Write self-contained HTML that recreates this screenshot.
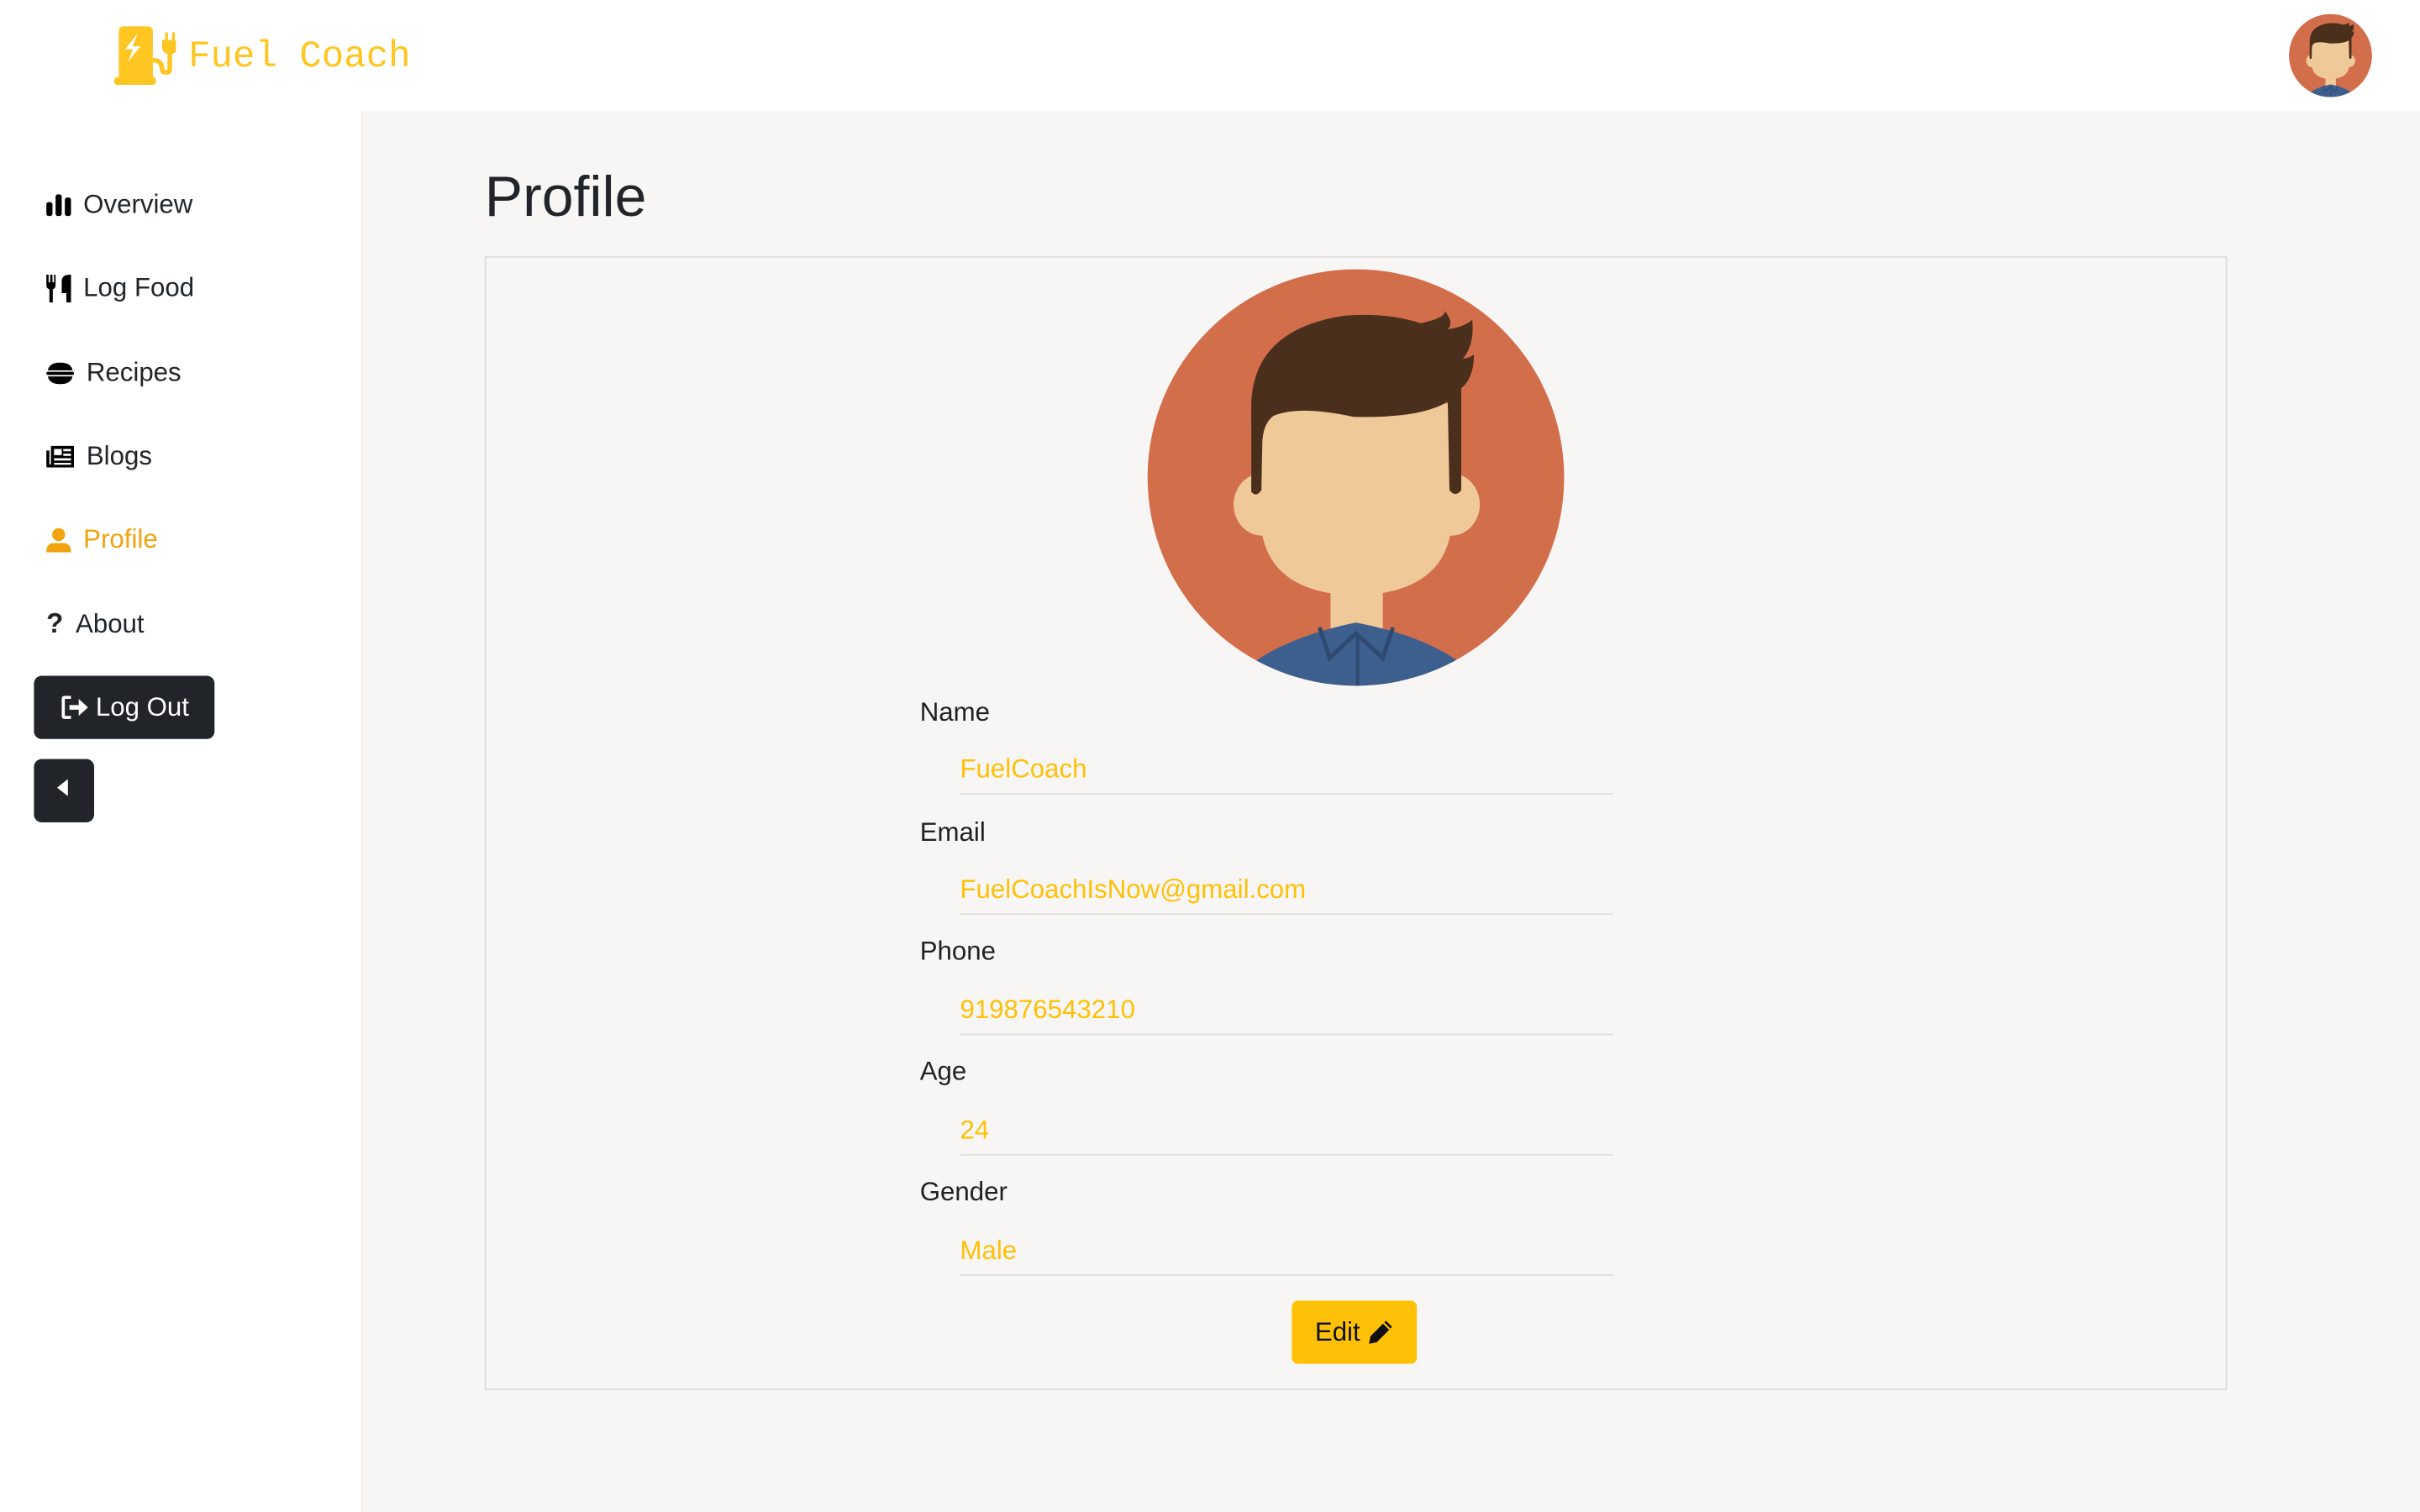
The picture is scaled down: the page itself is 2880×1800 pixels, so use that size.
<!DOCTYPE html>
<html><head><meta charset="utf-8">
<style>
*{margin:0;padding:0;box-sizing:border-box}
html,body{width:2880px;height:1800px;overflow:hidden;background:#fff}
#w{width:1568px;height:980px;transform:scale(1.836735);transform-origin:0 0;position:relative;font-family:"Liberation Sans","DejaVu Sans",sans-serif;color:#212529}
.hdr{position:absolute;left:0;top:0;width:1568px;height:72px;background:#fff}
.logo{position:absolute;left:74px;top:17px}
.brand{position:absolute;left:122px;top:24px;font-family:"Liberation Mono",monospace;font-size:24px;color:#ffc520}
.side{position:absolute;left:0;top:72px;width:234px;height:908px;background:#fff}
.main{position:absolute;left:234px;top:72px;width:1334px;height:908px;background:#f7f6f5;border-left:1px solid #eee}
.nav{position:absolute;left:30px;font-size:17px;display:flex;align-items:center}
.nav svg{margin-right:8px}
.btn{position:absolute;background:#212529;border-radius:5px;color:#fff}
h1{position:absolute;left:314px;top:107px;font-weight:400;font-size:37px;color:#212529}
.card{position:absolute;left:314px;top:166px;width:1129px;height:735px;border:1px solid #ddd}
.lbl{position:absolute;left:596px;font-size:17px;color:#222}
.val{position:absolute;left:622px;width:423px;font-size:17px;color:#ffc107;border-bottom:1px solid #ddd;height:26px}
.edit{position:absolute;left:837px;top:843px;width:81px;height:41px;background:#ffc107;border-radius:4px;font-size:17px;color:#111;display:flex;align-items:center;justify-content:center}
</style></head><body><div id="w">
<div class="hdr"></div>
<svg class="logo" width="40" height="38" viewBox="0 0 40 38">
<rect x="3" y="0" width="22" height="36" rx="3" fill="#ffc520"/><rect x="0" y="33" width="27" height="5" rx="2" fill="#ffc520"/>
<path d="M15 5 L7 15 L12 15 L9 23 L17 13 L12 13 Z" fill="#fff"/>
<path d="M25 22 Q31 22 31 28 Q31 30 34 30 Q36 30 36 27 L36 17" stroke="#ffc520" stroke-width="3" fill="none"/>
<path d="M31 9 L41 9 L41 13 Q41 18 36 18 Q31 18 31 13 Z" fill="#ffc520"/><rect x="33" y="4" width="1.8" height="6" fill="#ffc520"/><rect x="37.5" y="4" width="1.8" height="6" fill="#ffc520"/>
</svg>
<div class="brand">Fuel Coach</div>
<svg style="position:absolute;left:1483px;top:9px" width="54" height="54" viewBox="5 20 496 496"><use href="#av"/></svg>
<div class="side"></div>
<div class="main"></div>
<div class="nav" style="top:123px"><svg width="16" height="16" viewBox="0 0 16 16"><rect x="0" y="6" width="4" height="9" rx="1.5"/><rect x="6" y="1" width="4" height="14" rx="1.5"/><rect x="12" y="3" width="4" height="12" rx="1.5"/></svg>Overview</div>
<div class="nav" style="top:177px"><svg width="16" height="18" viewBox="0 0 16 18"><path d="M0 0h1.5v5h1V0h1.5v5h1V0H6v7Q6 9 4.2 9.5V18H2V9.5Q0 9 0 7Z"/><path d="M10 4Q10 0 16 0V18H13V12H10Z"/></svg>Log Food</div>
<div class="nav" style="top:232px"><svg width="18" height="14" viewBox="0 0 18 14"><path d="M1 5Q2 0 9 0Q16 0 17 5Z"/><rect x="0" y="6" width="18" height="2" rx="1"/><path d="M1 9H17Q16 14 9 14Q2 14 1 9Z"/></svg>Recipes</div>
<div class="nav" style="top:286px"><svg width="18" height="16" viewBox="0 0 18 16"><path d="M3 1H18V15H1Q0 15 0 14V4H2V13H3Z" /><rect x="5" y="3" width="5" height="4" fill="#fff"/><rect x="11" y="3" width="5" height="1.5" fill="#fff"/><rect x="11" y="6" width="5" height="1.5" fill="#fff"/><rect x="5" y="9" width="11" height="1.5" fill="#fff"/><rect x="5" y="12" width="11" height="1.2" fill="#fff"/></svg>Blogs</div>
<div class="nav" style="top:340px;color:#f0a30e"><svg width="16" height="16" viewBox="0 0 16 16"><circle cx="8" cy="4.5" r="4.2" fill="#f0a30e"/><path d="M0 16Q0 10 5 10H11Q16 10 16 16Z" fill="#f0a30e"/></svg>Profile</div>
<div class="nav" style="top:394px"><span style="font-weight:bold;font-size:18px;margin-right:8px">?</span>About</div>
<div class="btn" style="left:22px;top:438px;width:117px;height:41px;font-size:17px;display:flex;align-items:center;padding-left:18px"><svg width="18" height="16" viewBox="0 0 18 16" style="margin-right:4px"><path d="M6 1H2Q1 1 1 2V13Q1 14 2 14H6" stroke="#fff" stroke-width="2" fill="none"/><path d="M5 6H11V2L17 7.5L11 13V9H5Z" fill="#fff"/></svg>Log Out</div>
<div class="btn" style="left:22px;top:492px;width:39px;height:41px"><svg width="39" height="41" viewBox="0 0 39 41"><path d="M22 13V24L15 18.5Z" fill="#fff"/></svg></div>
<h1>Profile</h1>
<div class="card"></div>
<svg style="position:absolute;left:743px;top:174px" width="271" height="271" viewBox="5 20 496 496">
<defs><clipPath id="cc"><circle cx="253" cy="268" r="247"/></clipPath>
<g id="av"><g clip-path="url(#cc)">
<circle cx="253" cy="268" r="248" fill="#d36e4a"/>
<ellipse cx="142" cy="300" rx="34" ry="37" fill="#f0c999"/><ellipse cx="366" cy="300" rx="34" ry="37" fill="#f0c999"/>
<rect x="223" y="380" width="62" height="75" fill="#f0c999"/>
<path d="M140 190 L140 320 Q145 405 253 408 Q362 405 367 320 L367 180 Z" fill="#f0c999"/>
<path d="M135 485 Q180 455 253 440 Q330 455 373 485 L373 540 L135 540 Z" fill="#3d5f8d"/>
<path d="M210 446 L222 482 L253 453 L285 482 L297 446" stroke="#2e4a70" stroke-width="5" fill="none"/><line x1="255" y1="455" x2="255" y2="520" stroke="#2e4a70" stroke-width="4"/>
<path d="M129 285 L129 180 Q132 92 240 76 Q290 72 330 85 Q362 78 358 70 Q370 84 362 92 Q380 90 391 81 Q394 110 380 127 Q388 126 393 122 Q393 150 378 162 L378 283 Q371 292 364 283 L362 178 Q330 198 250 196 Q185 182 155 195 Q142 205 142 230 L141 283 Q135 292 129 285 Z" fill="#4a2f1d"/>
</g></g></defs>
<use href="#av"/>
</svg>
<div class="lbl" style="top:452px">Name</div><div class="val" style="top:489px">FuelCoach</div>
<div class="lbl" style="top:530px">Email</div><div class="val" style="top:567px">FuelCoachIsNow@gmail.com</div>
<div class="lbl" style="top:607px">Phone</div><div class="val" style="top:645px">919876543210</div>
<div class="lbl" style="top:685px">Age</div><div class="val" style="top:723px">24</div>
<div class="lbl" style="top:763px">Gender</div><div class="val" style="top:801px">Male</div>
<div class="edit">Edit&nbsp;<svg width="17" height="17" viewBox="0 0 17 17"><path d="M12 1L16 5L6 15L1 16L2 11Z" fill="#111"/><path d="M10.5 2.5L14.5 6.5" stroke="#ffc107" stroke-width="1.2"/></svg></div>
</div></body></html>
